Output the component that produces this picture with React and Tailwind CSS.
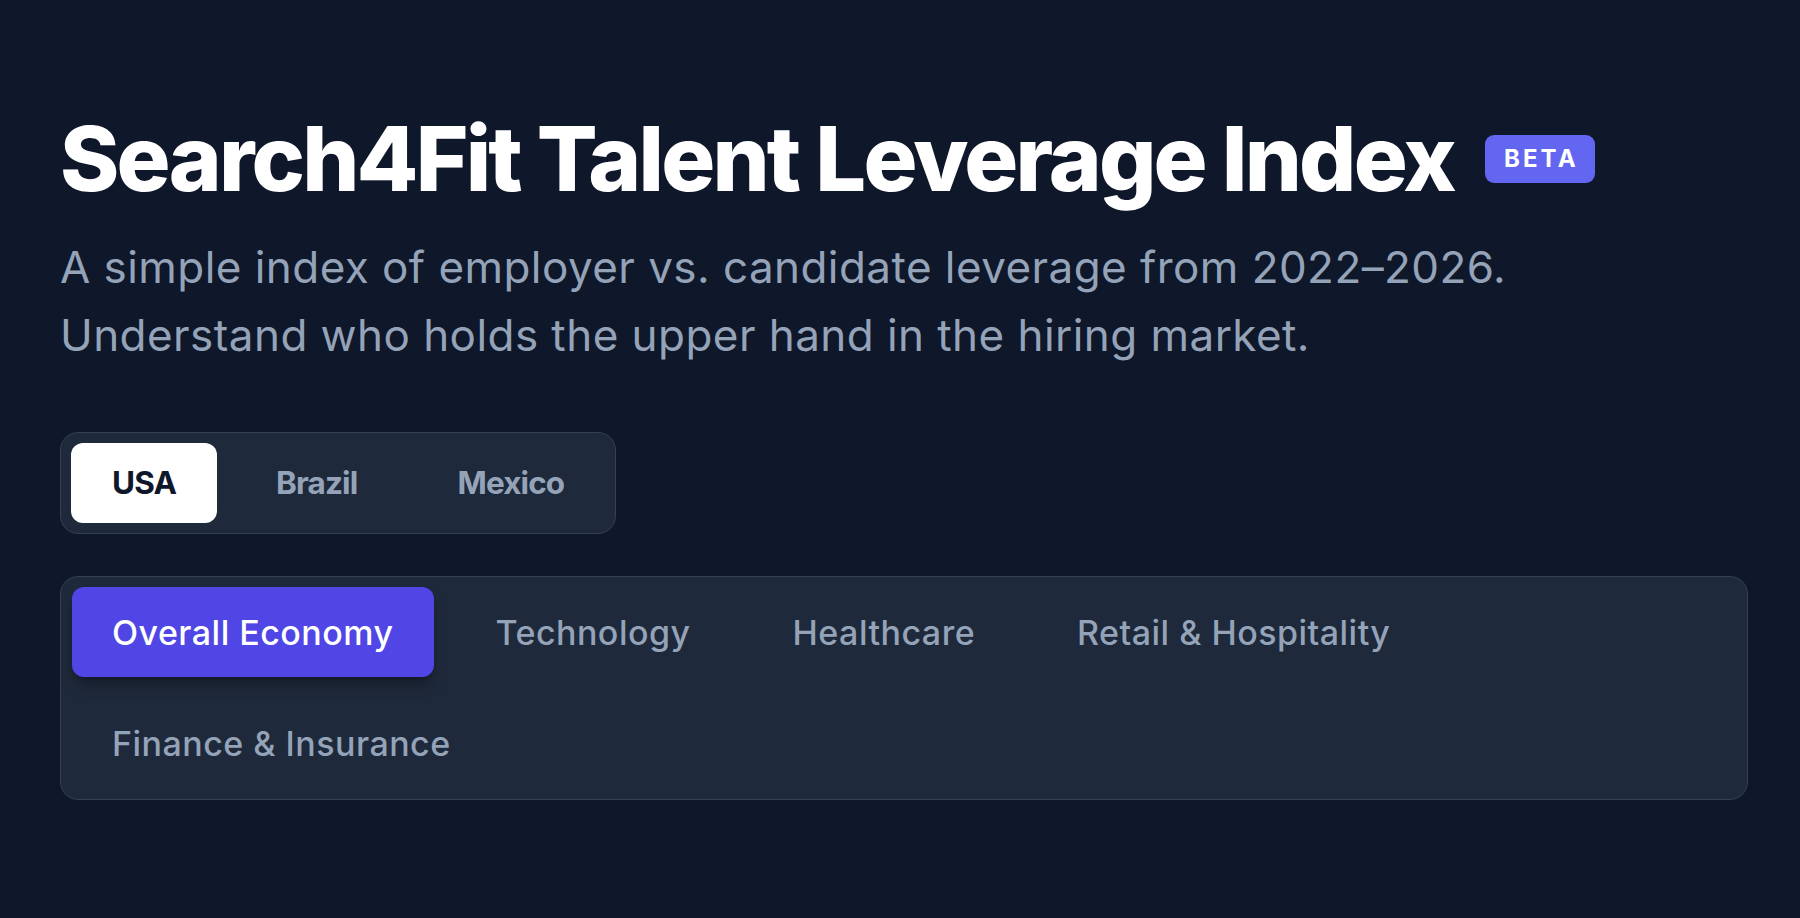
import { useState } from "react";

const countries = ["USA", "Brazil", "Mexico"];
const sectors = [
  "Overall Economy",
  "Technology",
  "Healthcare",
  "Retail & Hospitality",
  "Finance & Insurance",
];

export default function App() {
  const [country, setCountry] = useState("USA");
  const [sector, setSector] = useState("Overall Economy");

  return (
    <div className="min-h-screen bg-[#0f172a] font-['Inter',sans-serif] pl-[60px] pr-[52px] pt-[103px] pb-16">
      {/* Cabecera */}
      <div className="flex items-center gap-[31px]">
        <h1 className="text-[90px] leading-[1.25] font-extrabold tracking-[-0.031em] text-white">
          Search4Fit Talent Leverage Index
        </h1>
        <span className="rounded-[9px] bg-[#6366f1] pl-[19px] pr-[16px] py-[9px] text-[24px] leading-[30px] font-bold tracking-[0.13em] text-white">
          BETA
        </span>
      </div>
      <p className="mt-[17px] text-[44px] leading-[68px] tracking-[0.01em] text-[#94a3b8]">
        A simple index of employer vs. candidate leverage from 2022–2026.
        <br />
        Understand who holds the upper hand in the hiring market.
      </p>

      {/* Selector de país */}
      <div className="mt-[63px] inline-flex gap-[18px] rounded-[18px] border-[1.5px] border-[#334155] bg-[#1e293b] p-[10px]">
        {countries.map((c) => (
          <button
            key={c}
            onClick={() => setCountry(c)}
            className={
              c === country
                ? "h-[80px] rounded-[12px] bg-white px-[41px] text-[31.5px] font-bold tracking-[-0.028em] text-[#0f172a]"
                : "h-[80px] rounded-[12px] px-[41px] text-[31.5px] font-bold tracking-[-0.028em] text-[#94a3b8]"
            }
          >
            {c}
          </button>
        ))}
      </div>

      {/* Sectores */}
      <div className="mt-[42px] flex flex-wrap gap-x-[21px] gap-y-[21px] rounded-[18px] border-[1.5px] border-[#334155] bg-[#1e293b] p-[10.5px]">
        {sectors.map((s) => (
          <button
            key={s}
            onClick={() => setSector(s)}
            className={
              s === sector
                ? "h-[90px] rounded-[12px] bg-[#4f46e5] px-[40.5px] text-[34px] font-medium tracking-[0.014em] text-white shadow-lg shadow-black/30"
                : "h-[90px] rounded-[12px] px-[40.5px] text-[34px] font-medium tracking-[0.014em] text-[#94a3b8]"
            }
          >
            {s}
          </button>
        ))}
      </div>
    </div>
  );
}
